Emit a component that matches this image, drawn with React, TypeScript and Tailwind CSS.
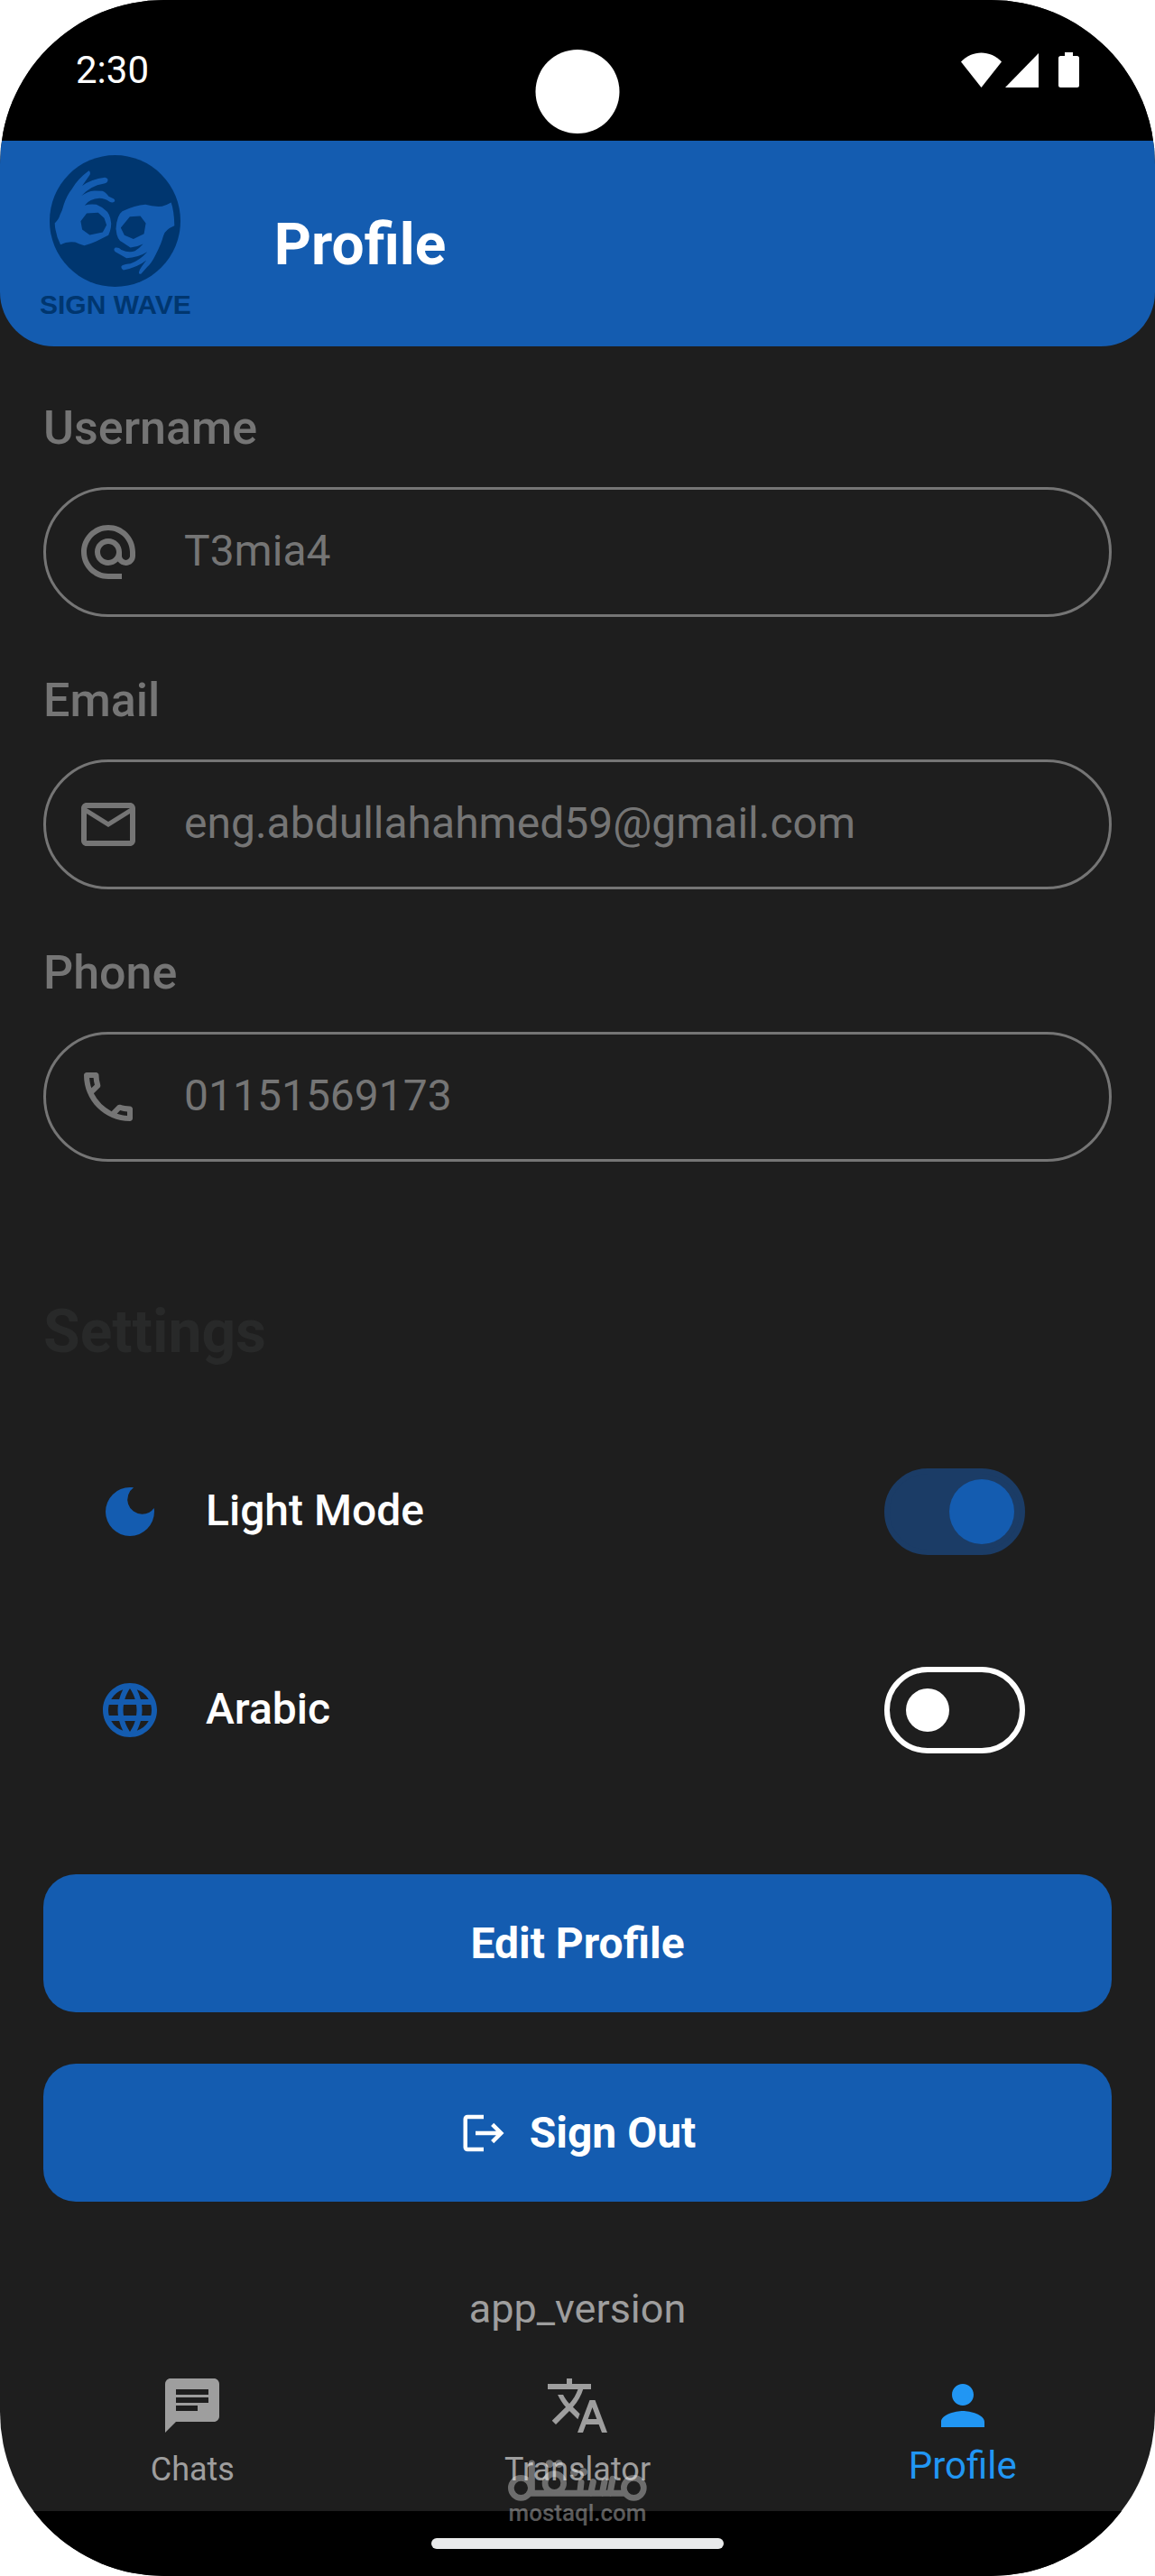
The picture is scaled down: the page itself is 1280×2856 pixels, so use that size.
import { useState } from 'react'
import type { IconType } from 'react-icons'
import {
  MdAlternateEmail,
  MdChat,
  MdDarkMode,
  MdLanguage,
  MdLogout,
  MdMailOutline,
  MdOutlinePhone,
  MdPerson,
  MdTranslate,
} from 'react-icons/md'

const FIELDS = [
  { id: 'username', label: 'Username', value: 'T3mia4', type: 'text', icon: MdAlternateEmail },
  { id: 'email', label: 'Email', value: 'eng.abdullahahmed59@gmail.com', type: 'email', icon: MdMailOutline },
  { id: 'phone', label: 'Phone', value: '01151569173', type: 'tel', icon: MdOutlinePhone },
]

export default function App() {
  const [lightMode, setLightMode] = useState(true)
  const [arabic, setArabic] = useState(false)

  return (
    <div className="min-h-screen bg-white font-['Roboto',sans-serif]">
      <div className="relative flex min-h-screen flex-col overflow-hidden rounded-[182px] bg-[#1e1e1e]">
        <StatusBar />

        <header className="flex items-center gap-[92px] rounded-b-[60px] bg-[#145cb0] py-4 pl-11">
          <Logo />
          <h1 className="pt-1 text-[64px] leading-[78px] font-bold text-white">Profile</h1>
        </header>

        <main className="flex flex-col px-12 pt-[59px]">
          <div className="flex flex-col gap-[61px]">
            {FIELDS.map(field => (
              <Field key={field.id} {...field} />
            ))}
          </div>

          <h2 className="mt-[150px] text-[66px] leading-[78px] font-bold text-[#282929]">Settings</h2>

          <div className="mt-28 flex flex-col gap-[124px] pr-24 pl-[60px]">
            <SettingRow id="light-mode" label="Light Mode" icon={MdDarkMode} checked={lightMode} onChange={setLightMode} />
            <SettingRow id="arabic" label="Arabic" icon={MdLanguage} checked={arabic} onChange={setArabic} />
          </div>

          <div className="mt-[134px] flex flex-col gap-[57px]">
            <button className="flex h-[153px] items-center justify-center rounded-[36px] bg-[#145cb0] text-5xl font-bold text-white">
              Edit Profile
            </button>
            <button className="flex h-[153px] items-center justify-center gap-6 rounded-[36px] bg-[#145cb0] text-5xl font-bold text-white">
              <MdLogout className="size-[54px]" />
              Sign Out
            </button>
          </div>

          <p className="mt-[94px] text-center text-[45px] leading-[50px] text-[#9e9e9e]">app_version</p>
        </main>

        <nav className="mt-[46px] flex pb-[25px]">
          <NavItem label="Chats" icon={MdChat} />
          <NavItem label="Translator" icon={MdTranslate} />
          <NavItem label="Profile" icon={MdPerson} active />
        </nav>

        {/* Gesture bar */}
        <div className="flex grow justify-center bg-black py-[30px]">
          <div className="h-3 w-[324px] rounded-full bg-[#e9eaeb]" />
        </div>

        <Watermark />
      </div>
    </div>
  )
}

function StatusBar() {
  return (
    <div className="relative flex h-[156px] items-start justify-between bg-black px-[84px] pt-[53px] text-white">
      <span className="text-[42px] leading-[50px]">2:30</span>
      <div className="absolute top-[55px] left-1/2 size-[93px] -translate-x-1/2 rounded-full bg-white" />
      <svg className="mt-[5px] h-[39px] w-[131px]" viewBox="0 0 131 39" fill="currentColor">
        <path d="M22.500 39 0 10.500C12-3 33-3 45 10.500Z" />
        <path d="M86 1v38H49z" />
        <path d="M115 0h9v4h4.500q2.500 0 2.500 2.500v30q0 2.500-2.500 2.500h-18q-2.500 0-2.500-2.500v-30q0-2.500 2.500-2.500h4.500z" />
      </svg>
    </div>
  )
}

function Logo() {
  return (
    <div className="flex flex-col items-center gap-1 pb-3.5 text-[#00366f]">
      <svg className="h-[146px] w-[145px]" viewBox="107 36 434 437">
        <ellipse cx="324" cy="254.500" rx="217" ry="218.500" fill="currentColor" />
        <g className="fill-[#145cb0]">
          <path d="M237 88Q244 92 240 102L215 138Q245 115 290 110Q301 112 300 120Q299 128 288 130Q240 138 213 171Q232 156 255 154L282 155Q292 158 303 173L320 181Q326 187 321 191Q315 196 305 190Q290 179 272 179Q240 180 223 203Q240 197 262 200Q280 208 290 217Q308 228 311 262Q312 280 302 302L262 322Q240 332 222 336Q205 331 192 325Q165 321 143 333Q126 300 124 262Q138 248 141 235Q150 218 154 200Q165 168 180 150Q200 115 237 88Z" />
          <path d="M510 193Q520 220 521 270Q490 282 484 305Q478 330 457 370Q445 395 430 408L410 430Q401 433 404 422Q408 410 428 385Q400 408 352 418Q343 413 345 405Q348 399 375 396Q405 386 431 357Q400 376 362 378L324 356Q317 348 325 343Q336 341 345 350Q370 362 390 354Q405 345 417 331Q395 342 375 343L348 325Q330 318 327 280Q330 235 348 222Q390 203 425 200Q450 208 480 206Q492 203 510 193Z" />
        </g>
        <path
          fill="currentColor"
          d="M230 229 268 227 288 245 296 268 283 292 240 301 215 283 210 255zM373 240 408 238 426 262 420 297 385 314 355 302 343 277 357 260z"
        />
      </svg>
      <span className="font-['Liberation_Sans',sans-serif] text-[30px] leading-8 font-bold">SIGN WAVE</span>
    </div>
  )
}

interface FieldProps {
  id: string
  label: string
  value: string
  type: string
  icon: IconType
}

function Field({ id, label, value, type, icon: Icon }: FieldProps) {
  return (
    <div className="flex flex-col gap-[33px] text-[#757575]">
      <label htmlFor={id} className="text-[52px] leading-[64px] font-medium">
        {label}
      </label>
      <div className="flex h-36 items-center gap-12 rounded-full border-[3px] border-[#757575] px-[33px]">
        <Icon className="size-[72px] shrink-0" />
        <input
          id={id}
          type={type}
          defaultValue={value}
          className="min-w-0 grow bg-transparent pb-1 text-5xl outline-none"
        />
      </div>
    </div>
  )
}

interface SettingRowProps {
  id: string
  label: string
  icon: IconType
  checked: boolean
  onChange: (checked: boolean) => void
}

function SettingRow({ id, label, icon: Icon, checked, onChange }: SettingRowProps) {
  return (
    <div className="flex items-center">
      <Icon className="size-[72px] shrink-0 text-[#145cb0]" />
      <label htmlFor={id} className="ml-12 grow pb-0.5 text-5xl font-medium text-white">
        {label}
      </label>
      <input
        id={id}
        type="checkbox"
        role="switch"
        checked={checked}
        onChange={e => onChange(e.target.checked)}
        className="flex h-24 w-[156px] appearance-none items-center rounded-full border-[6px] border-white px-[18px] before:size-12 before:rounded-full before:bg-white checked:justify-end checked:border-[#1b3c66] checked:bg-[#1b3c66] checked:px-1.5 checked:before:size-[72px] checked:before:bg-[#145cb0]"
      />
    </div>
  )
}

function NavItem({ label, icon: Icon, active = false }: { label: string; icon: IconType; active?: boolean }) {
  return (
    <a
      href="#"
      aria-current={active ? 'page' : undefined}
      className={`flex h-32 flex-1 flex-col items-center justify-between ${active ? 'text-[#2196f3]' : 'text-[#9e9e9e]'}`}
    >
      <Icon className="size-[72px]" />
      <span className={active ? 'text-[42px] leading-[50px]' : 'text-4xl leading-[42px]'}>{label}</span>
    </a>
  )
}

function Watermark() {
  return (
    <div className="pointer-events-none absolute bottom-[57px] left-1/2 flex -translate-x-1/2 flex-col items-center text-white opacity-35">
      <svg className="h-[46px] w-[154px]" viewBox="69 84 462 138" fill="none" stroke="currentColor">
        <circle cx="112" cy="178" r="33" strokeWidth="20" />
        <circle cx="223" cy="162" r="31" strokeWidth="20" />
        <circle cx="487" cy="178" r="33" strokeWidth="20" />
        <path d="M148 96V196H458M308 196 312 160M344 196 352 158M382 196 390 156M408 196 417 148" strokeWidth="21" strokeLinecap="round" />
        <g fill="currentColor" stroke="none">
          <circle cx="207" cy="98" r="13" />
          <circle cx="238" cy="98" r="13" />
          <circle cx="289" cy="127" r="13" />
          <circle cx="320" cy="125" r="13" />
        </g>
      </svg>
      <span className="text-[26px] leading-[26px] font-medium">mostaql.com</span>
    </div>
  )
}
